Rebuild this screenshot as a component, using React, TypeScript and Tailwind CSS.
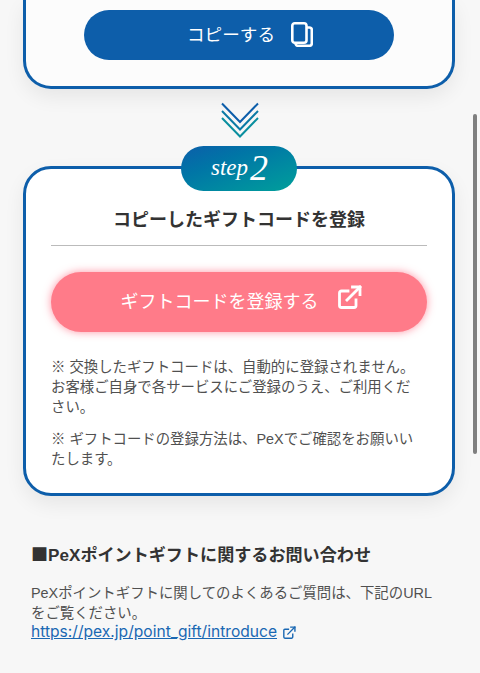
const jp = "font-['Liberation_Sans','Noto_Sans_CJK_JP',sans-serif]";

function CopyIcon() {
  return (
    <svg width="22" height="25" viewBox="0 0 22 25" fill="none" stroke="white" strokeWidth="2.6" strokeLinejoin="round">
      <path d="M15.5 5.5h2.8a2.5 2.5 0 0 1 2.5 2.5v13.3a2.5 2.5 0 0 1-2.5 2.5H7a2.5 2.5 0 0 1-2.5-2.5v-0.5" />
      <rect x="1.3" y="1.3" width="14.2" height="19.5" rx="2.5" />
    </svg>
  );
}

function ExternalIcon({ size, strokeWidth, color }: { size: number; strokeWidth: number; color: string }) {
  return (
    <svg width={size} height={size} viewBox="0 0 24 24" fill="none" stroke={color} strokeWidth={strokeWidth} strokeLinecap="square" strokeLinejoin="round">
      <path d="M10 6H3.5A2 2 0 0 0 1.5 8v12.5a2 2 0 0 0 2 2H16a2 2 0 0 0 2-2V15" />
      <path d="M9 15 22 2" />
      <path d="M14.5 2H22v7.5" />
    </svg>
  );
}

function Chevrons() {
  return (
    <svg width="38" height="36" viewBox="0 0 38 36" fill="none" strokeWidth="2">
      <path d="M1 1.5 19 20 37 1.5" stroke="#0d5eaa" />
      <path d="M1 9 19 27.5 37 9" stroke="#0b7aa5" />
      <path d="M1 16 19 34.5 37 16" stroke="#0a8f9f" />
    </svg>
  );
}

export default function App() {
  return (
    <div className={`relative h-[673px] w-[480px] overflow-hidden bg-[#f7f7f7] ${jp}`}>
      <div className="absolute right-[3px] top-[114px] h-[340px] w-[4px] rounded-full bg-[#7f7f7f]" />

      <div className="ml-[23px] flex h-[89px] w-[432px] justify-center rounded-b-[28px] border-x-[3px] border-b-[3px] border-[#0d5eaa] bg-[#fcfcfc] pt-[10px] shadow-[0_8px_20px_rgba(0,0,0,0.07)]">
        <button type="button" className="flex h-[50px] w-[310px] items-center justify-center gap-[16px] rounded-full bg-[#0d5eaa] pl-[22px] text-[17.6px] text-white">
          コピーする
          <span className="-translate-y-[1px]"><CopyIcon /></span>
        </button>
      </div>

      <div className="mt-[13px] ml-[221px] flex w-[38px]">
        <Chevrons />
      </div>

      <div className="relative z-10 ml-[181px] mt-[8px] flex h-[45px] w-[116px] items-center justify-center rounded-full bg-gradient-to-br from-[#0d5eaa] to-[#009f9a] pb-[2px] pl-[1px] text-white">
        <span className="font-['Liberation_Serif',serif] text-[23px] italic leading-none">step</span>
        <span className="ml-[2px] font-['Liberation_Serif',serif] text-[36px] italic leading-none">2</span>
      </div>

      <div className="ml-[23px] -mt-[25px] h-[330px] w-[432px] rounded-[28px] border-[3px] border-[#0d5eaa] bg-white px-[25px] pt-[38px] shadow-[0_8px_20px_rgba(0,0,0,0.07)]">
        <h2 className="border-b border-[#bbbbbb] pb-[12px] text-center text-[18px] font-bold leading-[26px] text-[#333333]">コピーしたギフトコードを登録</h2>
        <button type="button" className="mt-[26px] flex h-[60px] w-full items-center justify-center gap-[19px] rounded-full bg-[#ff7b89] pl-[4px] text-[18px] text-white shadow-[0_0_8px_rgba(255,60,90,0.55)]">
          ギフトコードを登録する
          <span className="-translate-y-[5px]"><ExternalIcon size={24} strokeWidth={2.8} color="white" /></span>
        </button>
        <p className="mt-[25px] text-[14.4px] leading-[20px] text-[#505050]">
          ※ 交換したギフトコードは、自動的に登録されません。<br />
          お客様ご自身で各サービスにご登録のうえ、ご利用くだ<br />
          さい。
        </p>
        <p className="mt-[12px] text-[14.4px] leading-[20px] text-[#505050]">
          ※ ギフトコードの登録方法は、PeXでご確認をお願いい<br />
          たします。
        </p>
      </div>

      <div className="ml-[31px] mt-[45px]">
        <h3 className="text-[17.1px] font-bold leading-[26px] text-[#333333]">
          <span className="font-['Noto_Sans_CJK_JP',sans-serif]">■</span>PeXポイントギフトに関するお問い合わせ
        </h3>
        <p className="mt-[14px] text-[14.4px] leading-[20px] text-[#505050]">
          PeXポイントギフトに関してのよくあるご質問は、下記のURL<br />
          をご覧ください。
        </p>
        <p className="flex items-center gap-[6px] font-['Inter',sans-serif] text-[15.6px] leading-[18px] text-[#1a68b3]">
          <span className="underline">https://pex.jp/point_gift/introduce</span>
          <ExternalIcon size={13} strokeWidth={2.6} color="#1a68b3" />
        </p>
      </div>
    </div>
  );
}
